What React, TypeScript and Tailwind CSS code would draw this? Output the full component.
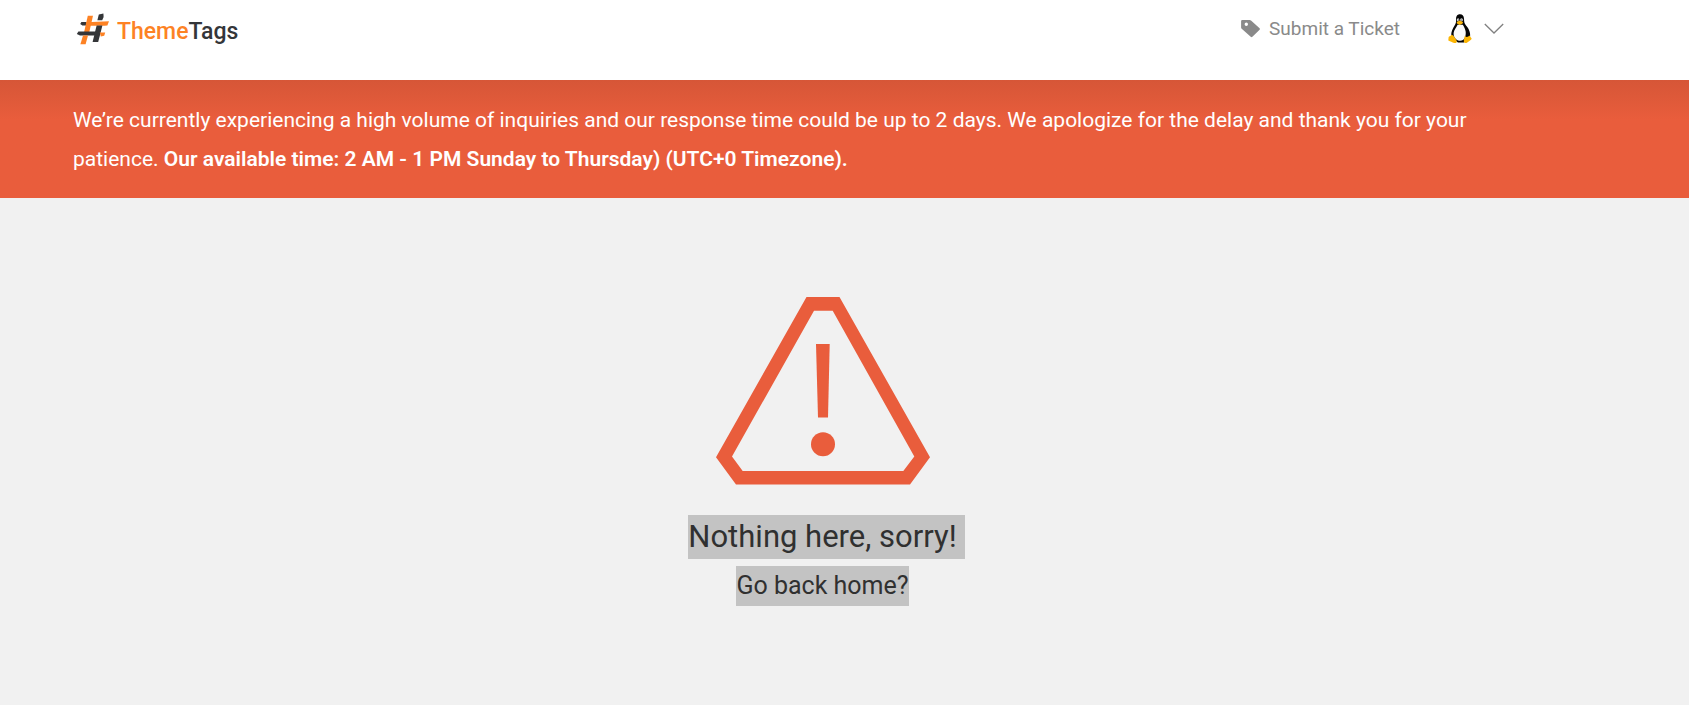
function HashMark() {
  return (
    <svg viewBox="0 0 34 34" className="h-[34px] w-[34px]" aria-hidden="true">
      <path d="M5.4 9 10.6 9 10 12.4 6.4 12.4 4.2 11z" fill="#343639" />
      <path d="M22.8 1.4 27.4 .4 27.6 4 26.2 7.2 21.4 7.2z" fill="#343639" />
      <path d="M11.8 2.8 17 2.8 13.2 19.6 8 19.6z" fill="#fd8224" />
      <path d="M10 9.2 33 8.2 31.4 12.4 28.6 12.8 11 12.8z" fill="#fd8224" />
      <path d="M20.6 12.4 26.4 12.4 22.2 29 16.6 29z" fill="#343639" />
      <path d="M2.4 18.4 23 18.4 23 22.4 4 22.4 .8 21z" fill="#343639" />
      <path d="M23.8 19.4 29.2 19.4 28.2 22.8 24.8 23.4z" fill="#fd8224" />
      <path d="M7 22.4 12 22.4 9.6 31.2 4.4 31.2z" fill="#fd8224" />
    </svg>
  );
}

function TagIcon() {
  return (
    <svg viewBox="0 0 20 18" className="h-[18px] w-5" aria-hidden="true">
      <path
        fill="#8a8a8a"
        fillRule="evenodd"
        d="M1.2 0H8.6Q9.4 0 10 .5L18.6 8.2Q19.3 9 18.6 9.8L11.4 16.8Q10.5 17.5 9.7 16.8L.7 8.8Q.1 8.2.1 7.4V1.2Q.1 0 1.2 0ZM5.3 2.6A1.7 1.7 0 1 0 5.3 6 1.7 1.7 0 1 0 5.3 2.6Z"
      />
    </svg>
  );
}

function Penguin() {
  return (
    <svg viewBox="0 0 24 30" className="h-[30px] w-6" aria-hidden="true">
      <path
        fill="#050505"
        d="M12 .3C9 .3 8 2.5 8.1 5.2 8.2 8 8 9.3 6.6 11.4 4.7 14.2 3.4 17.2 3.2 20.6L5.4 25 10 28.4H16L22 23.4C22.8 18.4 21 14.8 18 11.4 16 9 16.2 7.6 16 4.8 15.8 2 14.6.3 12 .3Z"
      />
      <path
        fill="#fafafa"
        d="M9.6 10.8 14.8 10.8C17 14.4 18.6 17.8 17.4 22.2 16.4 26.4 13 27.4 10 26.4 7 25 5.2 22.4 5.6 19 6 16 8.4 13.6 9.6 10.8Z"
      />
      <ellipse cx="10.1" cy="5.8" rx="1.2" ry="1.6" fill="#ddd" />
      <ellipse cx="13.5" cy="5.8" rx="1.4" ry="1.6" fill="#ddd" />
      <circle cx="10.4" cy="6" r=".5" />
      <circle cx="13.2" cy="6" r=".5" />
      <path fill="#f9b50a" d="M8.7 8 11.6 6.6 15 8 14.6 9.4 11.6 11 9 9.6Z" />
      <path
        fill="#fcb503"
        d="M3.4 20.8C5.2 20.7 6.4 23.2 8 25.4 9.6 27.7 8.4 29.6 6.2 29 4.2 28.3 2.2 27.4.8 26.8-.2 26.3.7 25 .5 23.8.4 22.2 2.7 22.6 3.4 20.8Z"
      />
      <path
        fill="#fcb503"
        d="M16.8 21.8C18 23.6 20 23.4 21.6 21.6 22 23.2 24 24 23.6 25 22.4 26.4 21 27 19.6 28.2 18 29.5 16 29.3 15.8 27.6 15.8 25.6 16.4 23.8 16.8 21.8Z"
      />
    </svg>
  );
}

function WarningIcon() {
  return (
    <svg viewBox="0 0 214 188" className="h-[188px] w-[214px]" aria-hidden="true">
      <path
        fill="#e95d3c"
        fillRule="evenodd"
        d="M90.5 0H123.5L214 160.3 194 187.5H20L0 160.3ZM98 13.7 16 159.5 26.7 174H187.3L198.3 159.5 116.7 13.7Z"
      />
      <path fill="#e95d3c" d="M100 47H113.7L112 120.5H102Z" />
      <circle cx="107" cy="147.3" r="12" fill="#e95d3c" />
    </svg>
  );
}

export default function App() {
  return (
    <div className="flex min-h-screen flex-col bg-[#f1f1f1] font-['Roboto',sans-serif]">
      <header className="flex h-20 items-start justify-between bg-white pr-[185px] pl-[76px]">
        <a href="#" aria-label="ThemeTags" className="flex items-start gap-[7px] pt-[13px]">
          <HashMark />
          <span className="text-[23px] leading-[38px] font-medium text-[#fd8224]">
            Theme<span className="text-[#343639]">Tags</span>
          </span>
        </a>
        <nav className="flex items-center gap-12 pt-[14px]">
          <a href="#" className="flex items-center gap-2 text-[19px] leading-[30px] text-[#8a8a8a]">
            <TagIcon />
            Submit a Ticket
          </a>
          <button type="button" aria-label="Account menu" className="flex items-center gap-3">
            <Penguin />
            <svg viewBox="0 0 20 12" className="h-3 w-5" aria-hidden="true">
              <path d="M.8 1 10 10 19.2 1" fill="none" stroke="#808080" strokeWidth="1.3" />
            </svg>
          </button>
        </nav>
      </header>

      <section className="bg-[#e95d3c] bg-linear-to-b from-[#d65637] to-[#e95d3c] to-[40px] pt-[21px] pr-[160px] pb-[19px] pl-[73px]">
        <p className="text-[21px] leading-[39px] text-white">
          We’re currently experiencing a high volume of inquiries and our response time could be up to 2 days. We
          apologize for the delay and thank you for your patience.{" "}
          <strong className="font-semibold">
            Our available time: 2 AM - 1 PM Sunday to Thursday) (UTC+0 Timezone).
          </strong>
        </p>
      </section>

      <main className="flex flex-col items-center pt-[99px] pr-11 text-[#303030]">
        <WarningIcon />
        <h1 className="mt-[30px] ml-2 bg-[#c3c3c3] pr-2 text-[31px] leading-[44px]">Nothing here, sorry!</h1>
        <a href="#" className="mt-[7px] bg-[#c3c3c3] text-[25px] leading-10">
          Go back home?
        </a>
      </main>
    </div>
  );
}
